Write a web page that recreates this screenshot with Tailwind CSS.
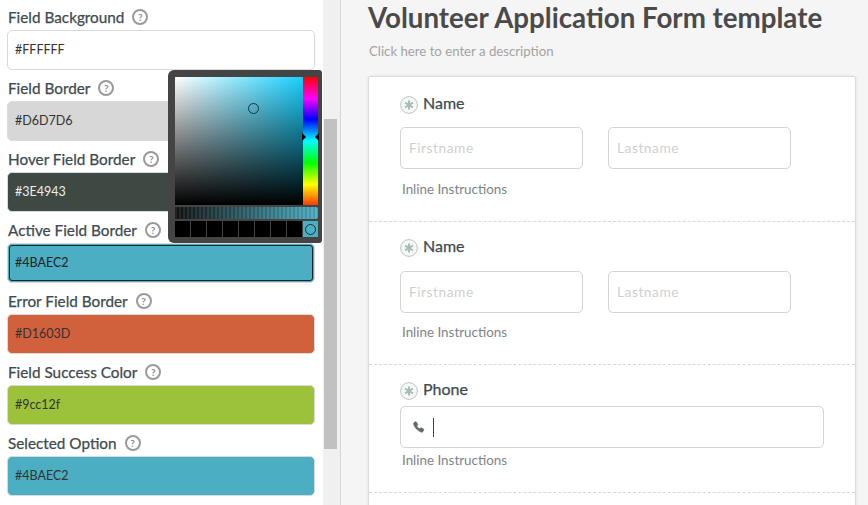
<!DOCTYPE html>
<html lang="en">
<head>
<meta charset="UTF-8">
<title>Volunteer Application Form template</title>
<script src="https://cdn.jsdelivr.net/npm/@tailwindcss/browser@4"></script>
</head>
<body class="h-[505px] overflow-hidden bg-[#f5f5f5] font-['Lato','Noto_Sans',sans-serif]">
<div class="flex h-[505px]">

  <!-- Settings panel -->
  <aside class="relative w-[323px] shrink-0 bg-white px-[7px] -mt-px">
    <div class="h-[31px] pl-px pt-[5px] flex items-center gap-[8px] text-[15.3px] [-webkit-text-stroke:0.25px] text-[#3e4a4f]">Field Background <span class="flex h-4 w-4 items-center justify-center rounded-full border-2 border-[#9a9a9a] text-[10px] font-bold text-[#8a8a8a] [-webkit-text-stroke:0]">?</span></div>
    <div class="flex h-10 w-[308px] items-center rounded-[5px] border border-[#d9d9d9] bg-white px-[7px] text-[12.5px] text-[#333]">#FFFFFF</div>

    <div class="h-[31px] pl-px pt-[5px] flex items-center gap-[8px] text-[15.3px] [-webkit-text-stroke:0.25px] text-[#3e4a4f]">Field Border <span class="flex h-4 w-4 items-center justify-center rounded-full border-2 border-[#9a9a9a] text-[10px] font-bold text-[#8a8a8a] [-webkit-text-stroke:0]">?</span></div>
    <div class="flex h-10 w-[308px] items-center rounded-[5px] border border-[#dcdcdc] bg-[#d6d7d6] px-[7px] text-[12.5px] text-[#333]">#D6D7D6</div>

    <div class="h-[31px] pl-px pt-[5px] flex items-center gap-[8px] text-[15.3px] [-webkit-text-stroke:0.25px] text-[#3e4a4f]">Hover Field Border <span class="flex h-4 w-4 items-center justify-center rounded-full border-2 border-[#9a9a9a] text-[10px] font-bold text-[#8a8a8a] [-webkit-text-stroke:0]">?</span></div>
    <div class="flex h-10 w-[308px] items-center rounded-[5px] border border-[#d9d9d9] bg-[#3e4943] px-[7px] text-[12.5px] text-[#eee]">#3E4943</div>

    <div class="h-[31px] pl-px pt-[5px] flex items-center gap-[8px] text-[15.3px] [-webkit-text-stroke:0.25px] text-[#3e4a4f]">Active Field Border <span class="flex h-4 w-4 items-center justify-center rounded-full border-2 border-[#9a9a9a] text-[10px] font-bold text-[#8a8a8a] [-webkit-text-stroke:0]">?</span></div>
    <div class="flex h-10 w-[308px] items-center rounded-[5px] border border-[#d9d9d9] bg-[#4baec2] px-[7px] text-[12.5px] text-[#222] outline-1 -outline-offset-3 outline-[#16232a]">#4BAEC2</div>

    <div class="h-[31px] pl-px pt-[5px] flex items-center gap-[8px] text-[15.3px] [-webkit-text-stroke:0.25px] text-[#3e4a4f]">Error Field Border <span class="flex h-4 w-4 items-center justify-center rounded-full border-2 border-[#9a9a9a] text-[10px] font-bold text-[#8a8a8a] [-webkit-text-stroke:0]">?</span></div>
    <div class="flex h-10 w-[308px] items-center rounded-[5px] border border-[#d9d9d9] bg-[#d1603d] px-[7px] text-[12.5px] text-[#333]">#D1603D</div>

    <div class="h-[31px] pl-px pt-[5px] flex items-center gap-[8px] text-[15.3px] [-webkit-text-stroke:0.25px] text-[#3e4a4f]">Field Success Color <span class="flex h-4 w-4 items-center justify-center rounded-full border-2 border-[#9a9a9a] text-[10px] font-bold text-[#8a8a8a] [-webkit-text-stroke:0]">?</span></div>
    <div class="flex h-10 w-[308px] items-center rounded-[5px] border border-[#d9d9d9] bg-[#9cc13b] px-[7px] text-[12.5px] text-[#333]">#9cc12f</div>

    <div class="h-[31px] pl-px pt-[5px] flex items-center gap-[8px] text-[15.3px] [-webkit-text-stroke:0.25px] text-[#3e4a4f]">Selected Option <span class="flex h-4 w-4 items-center justify-center rounded-full border-2 border-[#9a9a9a] text-[10px] font-bold text-[#8a8a8a] [-webkit-text-stroke:0]">?</span></div>
    <div class="flex h-10 w-[308px] items-center rounded-[5px] border border-[#d9d9d9] bg-[#4baec2] px-[7px] text-[12.5px] text-[#333]">#4BAEC2</div>

    <!-- Colour picker popover -->
    <div class="absolute left-[168px] top-[71px] h-[173px] w-[154px] rounded-l-[6px] rounded-r-[3px] bg-[#444444]">
      <div class="absolute left-[7px] top-[7px] h-[128px] w-[128px] bg-[linear-gradient(to_top,#000,transparent),linear-gradient(to_right,#fff,#17d0ff)]">
        <span class="absolute left-[73px] top-[26px] h-[11px] w-[11px] rounded-full border border-[#16343f]"></span>
      </div>
      <div class="absolute left-[135px] top-[7px] h-[128px] w-[15px] bg-[linear-gradient(to_bottom,#ff0000,#ff00ff_17%,#0000ff_33%,#00ffff_50%,#00ff00_67%,#ffff00_84%,#ff3b00)]">
        <span class="absolute -left-px top-[56px] h-0 w-0 border-y-[4px] border-l-[4px] border-y-transparent border-l-black"></span>
        <span class="absolute -right-px top-[56px] h-0 w-0 border-y-[4px] border-r-[4px] border-y-transparent border-r-black"></span>
      </div>
      <div class="absolute left-[7px] top-[137px] h-[12px] w-[143px] rounded-r-[2px] bg-[repeating-linear-gradient(to_right,rgba(255,255,255,0.07)_0,rgba(255,255,255,0.07)_2px,rgba(0,0,0,0.08)_2px,rgba(0,0,0,0.08)_4px),linear-gradient(to_right,#111,#4baec2)]"></div>
      <div class="absolute left-[7px] top-[151px] flex h-4 w-[143px] gap-px">
        <span class="w-[15px] bg-black"></span>
        <span class="w-[15px] bg-black"></span>
        <span class="w-[15px] bg-black"></span>
        <span class="w-[15px] bg-black"></span>
        <span class="w-[15px] bg-black"></span>
        <span class="w-[15px] bg-black"></span>
        <span class="w-[15px] bg-black"></span>
        <span class="w-[15px] bg-black"></span>
        <span class="flex w-[15px] items-center justify-center bg-[#4baec2]"><span class="h-[11px] w-[11px] rounded-full border border-[#16343f]"></span></span>
      </div>
    </div>
  </aside>

  <!-- Scrollbar -->
  <div class="w-[17px] shrink-0 bg-[#f0f0f0] pl-px pt-[119px]">
    <div class="h-[330px] w-[13px] bg-[#c1c1c1]"></div>
  </div>

  <!-- Form preview -->
  <main class="flex-1 border-l border-[#d6d6d6] pl-[27px]">
    <h1 class="h-[38px] whitespace-nowrap text-[27.7px] font-bold leading-[38px] -mt-px text-[#4a4a4a]">Volunteer Application Form template</h1>
    <p class="h-[39px] pl-px pt-[4px] text-[13.2px] leading-[20px] text-[#a3a3a3]">Click here to enter a description</p>

    <div class="w-[488px] rounded-t-[3px] border border-[#dcdcdc] bg-white shadow-[0_0_3px_rgba(0,0,0,0.1)]">
      <section class="h-[145px] border-b border-dashed border-[#d8d8d8] pl-[31px] pt-[19px]">
        <div class="flex h-[18px] items-center gap-[5px] text-[16px] leading-[16px] [-webkit-text-stroke:0.25px] text-[#3e4a4f]">
          <svg width="18" height="18" viewBox="0 0 18 18"><circle cx="9" cy="9" r="8.4" fill="#f6f8f7" stroke="#b9c6c1"/><path d="M9 4.500v9M5.100 6.700l7.800 4.600M12.900 6.700l-7.800 4.600" stroke="#a9bcb5" stroke-width="2"/></svg>
          <span class="-mt-[4px]">Name</span>
        </div>
        <div class="mt-[13px] flex gap-[25px]">
          <input placeholder="Firstname" class="h-[42px] w-[183px] rounded-[5px] border border-[#d4d4d4] px-2 pb-px text-[13.8px] tracking-[0.5px] placeholder:text-[#cfcfcf]">
          <input placeholder="Lastname" class="h-[42px] w-[183px] rounded-[5px] border border-[#d4d4d4] px-2 pb-px text-[13.8px] tracking-[0.5px] placeholder:text-[#cfcfcf]">
        </div>
        <p class="mt-[10px] pl-[2px] text-[13.4px] leading-[20px] text-[#7d8487]">Inline Instructions</p>
      </section>

      <section class="h-[143px] border-b border-dashed border-[#d8d8d8] pl-[31px] pt-[17px]">
        <div class="flex h-[18px] items-center gap-[5px] text-[16px] leading-[16px] [-webkit-text-stroke:0.25px] text-[#3e4a4f]">
          <svg width="18" height="18" viewBox="0 0 18 18"><circle cx="9" cy="9" r="8.4" fill="#f6f8f7" stroke="#b9c6c1"/><path d="M9 4.500v9M5.100 6.700l7.800 4.600M12.900 6.700l-7.800 4.600" stroke="#a9bcb5" stroke-width="2"/></svg>
          <span class="-mt-[4px]">Name</span>
        </div>
        <div class="mt-[14px] flex gap-[25px]">
          <input placeholder="Firstname" class="h-[42px] w-[183px] rounded-[5px] border border-[#d4d4d4] px-2 pb-px text-[13.8px] tracking-[0.5px] placeholder:text-[#cfcfcf]">
          <input placeholder="Lastname" class="h-[42px] w-[183px] rounded-[5px] border border-[#d4d4d4] px-2 pb-px text-[13.8px] tracking-[0.5px] placeholder:text-[#cfcfcf]">
        </div>
        <p class="mt-[9px] pl-[2px] text-[13.4px] leading-[20px] text-[#7d8487]">Inline Instructions</p>
      </section>

      <section class="h-[128px] border-b border-dashed border-[#d8d8d8] pl-[31px] pt-[17px]">
        <div class="flex h-[18px] items-center gap-[5px] text-[16px] leading-[16px] [-webkit-text-stroke:0.25px] text-[#3e4a4f]">
          <svg width="18" height="18" viewBox="0 0 18 18"><circle cx="9" cy="9" r="8.4" fill="#f6f8f7" stroke="#b9c6c1"/><path d="M9 4.500v9M5.100 6.700l7.800 4.600M12.900 6.700l-7.800 4.600" stroke="#a9bcb5" stroke-width="2"/></svg>
          <span class="-mt-[4px]">Phone</span>
        </div>
        <div class="mt-[6px] flex h-[42px] w-[424px] items-center rounded-[5px] border border-[#d4d4d4] pl-[12px]">
          <svg width="12" height="12" viewBox="0 0 12 12"><path d="M1 1.600 3 .600l2 2.900-1.200 1.200c.5 1.200 1.600 2.400 3 3l1.200-1.200 3 1.900-1 2.200c-.3.500-1 .9-1.700.7C4.300 9.500 1.800 6.800.6 3.300.4 2.600.5 2 1 1.600Z" fill="#5f6a68" stroke="#5f6a68" stroke-width="0.5"/></svg>
          <span class="ml-[8px] h-[19px] w-px bg-[#444]"></span>
        </div>
        <p class="mt-[2px] pl-[2px] text-[13.4px] leading-[20px] text-[#7d8487]">Inline Instructions</p>
      </section>
      <div class="h-4"></div>
    </div>
  </main>
</div>
</body>
</html>
